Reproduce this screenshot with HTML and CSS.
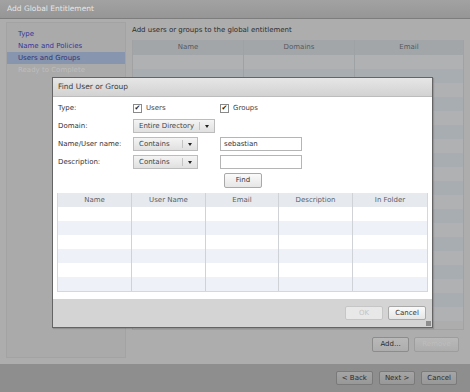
FILE: index.html
```html
<!DOCTYPE html>
<html>
<head>
<meta charset="utf-8">
<link rel="stylesheet" href="styles.css">
</head>
<body>
<div class="app">
  <div class="titlebar">Add Global Entitlement</div>
  <div class="main">
    <nav class="steps">
      <div class="step link">Type</div>
      <div class="step link">Name and Policies</div>
      <div class="step link selected">Users and Groups</div>
      <div class="step disabled">Ready to Complete</div>
    </nav>
    <section class="content">
      <p class="intro">Add users or groups to the global entitlement</p>
      <div class="otable">
        <div class="orow ohead"><span>Name</span><span>Domains</span><span>Email</span></div>
        <div class="orow"><span></span><span></span><span></span></div>
        <div class="orow alt"><span></span><span></span><span></span></div>
        <div class="orow"><span></span><span></span><span></span></div>
        <div class="orow alt"><span></span><span></span><span></span></div>
        <div class="orow"><span></span><span></span><span></span></div>
        <div class="orow alt"><span></span><span></span><span></span></div>
        <div class="orow"><span></span><span></span><span></span></div>
        <div class="orow alt"><span></span><span></span><span></span></div>
        <div class="orow"><span></span><span></span><span></span></div>
        <div class="orow alt"><span></span><span></span><span></span></div>
        <div class="orow"><span></span><span></span><span></span></div>
        <div class="orow alt"><span></span><span></span><span></span></div>
        <div class="orow"><span></span><span></span><span></span></div>
        <div class="orow alt"><span></span><span></span><span></span></div>
        <div class="orow"><span></span><span></span><span></span></div>
        <div class="orow alt"><span></span><span></span><span></span></div>
        <div class="orow"><span></span><span></span><span></span></div>
        <div class="orow alt"><span></span><span></span><span></span></div>
        <div class="orow"><span></span><span></span><span></span></div>
      </div>
      <div class="actions">
        <button class="obtn">Add...</button>
        <button class="obtn off">Remove</button>
      </div>
    </section>
  </div>
  <div class="footer">
    <button class="obtn">&lt; Back</button>
    <button class="obtn">Next &gt;</button>
    <button class="obtn">Cancel</button>
  </div>

  <div class="modal">
    <div class="mtitle">Find User or Group</div>
    <div class="mbody">
      <div class="form">
        <label>Type:</label>
        <div class="check"><span class="box">&#10004;</span>Users</div>
        <div class="check"><span class="box">&#10004;</span>Groups</div>
        <label>Domain:</label>
        <div class="select wide"><span>Entire Directory</span><i></i></div>
        <div></div>
        <label>Name/User name:</label>
        <div class="select"><span>Contains</span><i></i></div>
        <div class="input">sebastian</div>
        <label>Description:</label>
        <div class="select"><span>Contains</span><i></i></div>
        <div class="input"></div>
        <div></div>
        <div></div>
        <div class="findcell"><button class="mbtn">Find</button></div>
      </div>
      <div class="mtable">
        <div class="mrow mhead"><span>Name</span><span>User Name</span><span>Email</span><span>Description</span><span>In Folder</span></div>
        <div class="mrow"><span></span><span></span><span></span><span></span><span></span></div>
        <div class="mrow alt"><span></span><span></span><span></span><span></span><span></span></div>
        <div class="mrow"><span></span><span></span><span></span><span></span><span></span></div>
        <div class="mrow alt"><span></span><span></span><span></span><span></span><span></span></div>
        <div class="mrow"><span></span><span></span><span></span><span></span><span></span></div>
        <div class="mrow alt"><span></span><span></span><span></span><span></span><span></span></div>
      </div>
    </div>
    <div class="mfoot">
      <button class="mbtn off">OK</button>
      <button class="mbtn">Cancel</button>
      <span class="grip"></span>
    </div>
  </div>
</div>
</body>
</html>
```
FILE: styles.css
```css
* { box-sizing: border-box; }
html, body { margin: 0; padding: 0; }
body {
  width: 470px;
  height: 392px;
  overflow: hidden;
  font-family: "DejaVu Sans", Verdana, sans-serif;
  font-size: 7px;
  background: #adadad;
}
button { font-family: inherit; font-size: 7px; }
.app {
  position: relative;
  width: 470px;
  height: 392px;
  display: flex;
  flex-direction: column;
  background: #adadad;
}
.titlebar {
  height: 19px;
  flex: none;
  background: linear-gradient(#a2a2a2, #969696);
  border-bottom: 1px solid #7d7d7d;
  color: #e6e6e6;
  padding-left: 7px;
  line-height: 18px;
  font-size: 7.5px;
}
.main {
  flex: 1;
  display: flex;
  gap: 6px;
  padding: 3px 6px 6px 6px;
}
.steps {
  width: 120px;
  flex: none;
  border: 1px solid #a3a3a3;
  background: #aaaaaa;
  padding-top: 5px;
}
.step {
  height: 12px;
  line-height: 12px;
  padding-left: 11px;
}
.step.link { color: #35359a; }
.step.selected { background: #8795ae; color: #30367a; }
.step.disabled { color: #bdbdbd; }
.content {
  flex: 1;
  display: flex;
  flex-direction: column;
}
.intro {
  margin: 4px 0 0 0;
  height: 14px;
  color: #2e2e2e;
}
.otable {
  height: 290px;
  overflow: hidden;
  border: 1px solid #a0a2a4;
  border-top: none;
}
.orow {
  display: grid;
  grid-template-columns: 111px 111px 1fr;
  height: 14px;
  background: #b0b1b2;
}
.orow.alt { background: #a8adb2; }
.orow span { border-right: 1px solid #9fa2a5; }
.orow span:last-child { border-right: none; }
.orow.ohead {
  height: 15px;
  background: #a3a6a9;
  color: #555a60;
  line-height: 14px;
  text-align: center;
}
.actions {
  display: flex;
  justify-content: flex-end;
  gap: 5px;
  margin-top: 7px;
  padding-right: 5px;
}
.obtn {
  height: 15px;
  padding: 0 6px;
  background: linear-gradient(#b9b9b9, #adadad);
  border: 1px solid #8c8c8c;
  border-radius: 2px;
  color: #2c2c2c;
  line-height: 13px;
}
.actions .obtn:first-child { width: 37px; }
.obtn.off { color: #bdbdbd; border-color: #9d9d9d; width: 45px; }
.footer {
  height: 28px;
  flex: none;
  background: #8e8e8e;
  display: flex;
  justify-content: flex-end;
  align-items: center;
  gap: 6px;
  padding-right: 13px;
}
.footer .obtn { height: 14px; padding: 0 5px; background: linear-gradient(#a5a5a5, #989898); border-color: #7a7a7a; }

.modal {
  position: absolute;
  left: 52px;
  top: 77px;
  width: 381px;
  height: 251px;
  border: 1px solid #646464;
  background: #ffffff;
  display: flex;
  flex-direction: column;
  box-shadow: 1px 1px 1px rgba(0,0,0,0.15);
}
.mtitle {
  height: 19px;
  flex: none;
  background: linear-gradient(#e6e6e6, #d2d2d2);
  border-bottom: 1px solid #bcbcbc;
  color: #3a3a3a;
  line-height: 18px;
  padding-left: 5px;
  font-size: 7.5px;
}
.mbody {
  flex: 1;
  padding: 4px 4px 0 4px;
  display: flex;
  flex-direction: column;
}
.form {
  display: grid;
  grid-template-columns: 75px 87px 1fr;
  grid-auto-rows: 14px;
  row-gap: 4px;
  align-items: center;
  padding-left: 1px;
  color: #333;
}
.form label { color: #333; }
.check { display: flex; align-items: center; gap: 4px; color: #444; }
.box {
  width: 9px;
  height: 9px;
  border: 1px solid #8a8a8a;
  background: #fff;
  font-size: 7px;
  line-height: 7px;
  text-align: center;
  color: #222;
}
.select {
  width: 65px;
  height: 14px;
  display: flex;
  border: 1px solid #bcbcbc;
  background: linear-gradient(#f4f4f4, #e0e0e0);
  color: #444;
  line-height: 12px;
}
.select.wide { width: 82px; }
.select span { flex: 1; padding-left: 5px; border-right: 1px solid #c4c4c4; white-space: nowrap; margin: 2px 0; line-height: 8px; }
.select i {
  width: 14px;
  flex: none;
  position: relative;
}
.select i::after {
  content: "";
  position: absolute;
  left: 5px;
  top: 5px;
  border-left: 2px solid transparent;
  border-right: 2px solid transparent;
  border-top: 3px solid #222;
}
.input {
  width: 82px;
  height: 14px;
  border: 1px solid #b5b5b5;
  background: #fff;
  padding-left: 3px;
  line-height: 12px;
  color: #333;
}
.findcell { padding-left: 4px; }
.form .findcell { grid-row: 5; grid-column: 3; }
.mbtn {
  height: 15px;
  width: 38px;
  padding: 0;
  border: 1px solid #a9a9a9;
  border-radius: 2px;
  background: linear-gradient(#fafafa, #e6e6e6);
  color: #333;
}
.mtable {
  margin-top: 6px;
  width: 371px;
  border: 1px solid #d4d8dc;
  border-top: none;
}
.mrow {
  display: grid;
  grid-template-columns: 74px 74px 73px 74px 1fr;
  height: 14px;
  background: #ffffff;
}
.mrow.alt { background: #eef2f8; }
.mrow span { border-right: 1px solid #cfd3d7; }
.mrow span:last-child { border-right: none; }
.mrow.mhead {
  background: #e6eaee;
  color: #5a6068;
  line-height: 14px;
  text-align: center;
}
.mfoot {
  height: 28px;
  flex: none;
  background: #d4d4d4;
  display: flex;
  justify-content: flex-end;
  align-items: center;
  gap: 5px;
  padding-right: 6px;
  position: relative;
}
.mfoot .mbtn { width: 38px; height: 14px; }
.mfoot .mbtn.off { color: #c4c4c4; border-color: #c6c6c6; background: #e8e8e8; }
.grip {
  position: absolute;
  right: 1px;
  bottom: 1px;
  width: 5px;
  height: 5px;
  background-image: radial-gradient(#888 0.7px, transparent 0.8px);
  background-size: 2px 2px;
}
```
